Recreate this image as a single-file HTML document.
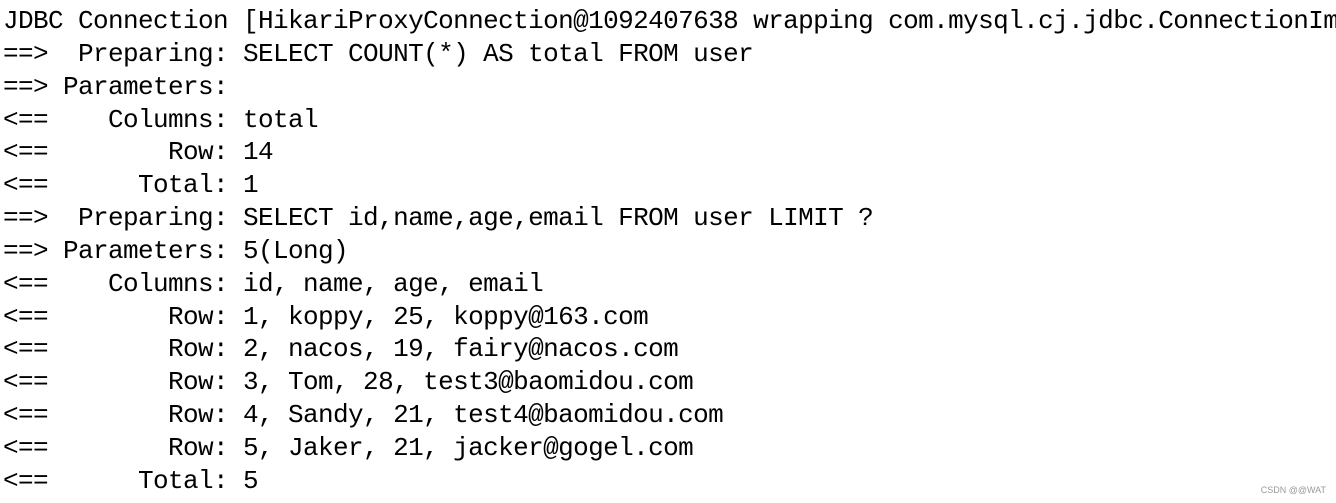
<!DOCTYPE html>
<html><head><meta charset="utf-8"><style>
html,body{margin:0;padding:0;background:#fff;width:1336px;height:503px;overflow:hidden;}
pre{margin:0;position:absolute;left:3px;top:5px;font-family:"Liberation Mono",monospace;font-size:26px;letter-spacing:-0.6px;line-height:32.85px;color:#000;white-space:pre;}
.wm{position:absolute;right:10px;bottom:8px;font-family:"Liberation Sans",sans-serif;font-size:9px;color:#999;}
</style></head><body>
<pre>JDBC Connection [HikariProxyConnection@1092407638 wrapping com.mysql.cj.jdbc.ConnectionIm
==>  Preparing: SELECT COUNT(*) AS total FROM user
==> Parameters: 
&lt;==    Columns: total
&lt;==        Row: 14
&lt;==      Total: 1
==>  Preparing: SELECT id,name,age,email FROM user LIMIT ?
==> Parameters: 5(Long)
&lt;==    Columns: id, name, age, email
&lt;==        Row: 1, koppy, 25, koppy@163.com
&lt;==        Row: 2, nacos, 19, fairy@nacos.com
&lt;==        Row: 3, Tom, 28, test3@baomidou.com
&lt;==        Row: 4, Sandy, 21, test4@baomidou.com
&lt;==        Row: 5, Jaker, 21, jacker@gogel.com
&lt;==      Total: 5</pre>
<div class="wm">CSDN @@WAT</div>
</body></html>
